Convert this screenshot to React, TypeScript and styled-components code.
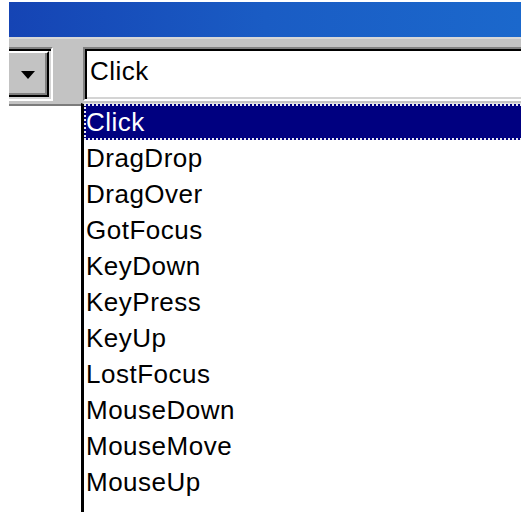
import React from "react";
import styled, { createGlobalStyle } from "styled-components";

const GlobalStyle = createGlobalStyle`
  html, body {
    margin: 0;
    padding: 0;
    background: #ffffff;
  }
  body {
    font-family: "Liberation Sans", Arial, sans-serif;
  }
`;

const events = [
  "Click",
  "DragDrop",
  "DragOver",
  "GotFocus",
  "KeyDown",
  "KeyPress",
  "KeyUp",
  "LostFocus",
  "MouseDown",
  "MouseMove",
  "MouseUp",
];

const Screen = styled.div`
  position: relative;
  margin: 2px 0 0 9px;
  width: 512px;
  height: 510px;
  overflow: hidden;
  display: flex;
  flex-direction: column;
  background: #ffffff;
`;

const TitleBar = styled.div`
  height: 35px;
  flex-shrink: 0;
  background: linear-gradient(90deg, #1544b4 0%, #1a5cc4 50%, #1b68cc 100%);
`;

const Toolbar = styled.div`
  height: 69px;
  flex-shrink: 0;
  display: flex;
  align-items: flex-start;
  gap: 30px;
  padding-top: 8px;
  box-sizing: border-box;
  background: #c3c3c3;
  border-top: 2px solid #d8d8d8;
  border-bottom: 2px solid #7c7c7c;
`;

const ComboEdge = styled.div`
  width: 44px;
  height: 54px;
  flex-shrink: 0;
  box-sizing: border-box;
  display: flex;
  border-top: 2px solid #808080;
  border-right: 2px solid #ffffff;
  border-bottom: 2px solid #ffffff;
  box-shadow: inset 0 2px 0 #000000, inset -2px -2px 0 #d4d4d4;
  padding: 2px 2px 2px 0;
`;

const DropButton = styled.div`
  flex: 1;
  box-sizing: border-box;
  display: flex;
  align-items: center;
  justify-content: center;
  background: #c3c3c3;
  border-top: 2px solid #ffffff;
  border-right: 2px solid #000000;
  border-bottom: 2px solid #000000;
  box-shadow: inset -2px -2px 0 #808080;
`;

const Arrow = styled.div`
  width: 0;
  height: 0;
  border-left: 7px solid transparent;
  border-right: 7px solid transparent;
  border-top: 8px solid #000000;
  margin-top: 2px;
`;

const TextField = styled.div`
  flex: 1;
  height: 54px;
  box-sizing: border-box;
  margin-right: -20px;
  border-top: 2px solid #808080;
  border-left: 2px solid #808080;
  border-bottom: 2px solid #ffffff;
  background: #ffffff;
  box-shadow: inset 2px 2px 0 #000000, inset 0 -2px 0 #d4d4d4;
  padding: 2px 4px 6px 5px;
  font-size: 26px;
  line-height: 40px;
  letter-spacing: 0.5px;
  color: #000000;
`;

const CodeArea = styled.div`
  flex: 1;
  background: #ffffff;
`;

const DropList = styled.ul`
  position: absolute;
  left: 72px;
  top: 101px;
  width: 470px;
  margin: 0;
  padding: 0 0 40px 0;
  list-style: none;
  background: #ffffff;
  border-left: 3px solid #000000;
  border-top: 1px solid #e4e4e4;
`;

const Item = styled.li<{ $selected?: boolean }>`
  height: 36px;
  box-sizing: border-box;
  padding-left: ${(p) => (p.$selected ? "0px" : "2px")};
  font-size: 26px;
  line-height: ${(p) => (p.$selected ? "32px" : "36px")};
  letter-spacing: 0.5px;
  white-space: nowrap;
  color: ${(p) => (p.$selected ? "#ffffff" : "#000000")};
  background: ${(p) => (p.$selected ? "#000080" : "transparent")};
  border: ${(p) => (p.$selected ? "2px dotted #e8e8f4" : "none")};
`;

export default function App() {
  return (
    <>
      <GlobalStyle />
      <Screen>
        <TitleBar />
        <Toolbar>
          <ComboEdge>
            <DropButton>
              <Arrow />
            </DropButton>
          </ComboEdge>
          <TextField>Click</TextField>
        </Toolbar>
        <CodeArea />
        <DropList>
          {events.map((name, i) => (
            <Item key={name} $selected={i === 0}>
              {name}
            </Item>
          ))}
        </DropList>
      </Screen>
    </>
  );
}
